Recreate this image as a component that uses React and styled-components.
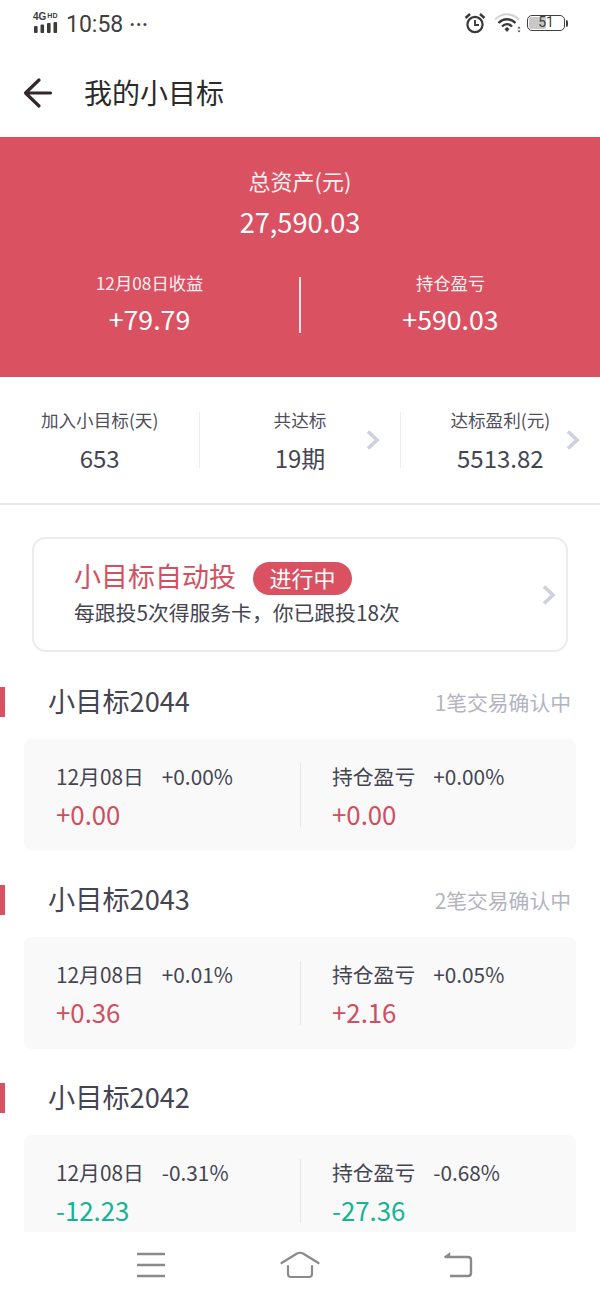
import styled, { createGlobalStyle } from "styled-components";

const GlobalStyle = createGlobalStyle`
  html, body { margin: 0; padding: 0; background: #fff; }
  * { box-sizing: border-box; }
  body { font-family: "Noto Sans CJK SC", "Noto Sans", sans-serif; }
`;

const goals = [
  {
    name: "小目标2044",
    note: "1笔交易确认中",
    dayRate: "+0.00%",
    day: "+0.00",
    holdRate: "+0.00%",
    hold: "+0.00",
  },
  {
    name: "小目标2043",
    note: "2笔交易确认中",
    dayRate: "+0.01%",
    day: "+0.36",
    holdRate: "+0.05%",
    hold: "+2.16",
  },
  {
    name: "小目标2042",
    note: "",
    dayRate: "-0.31%",
    day: "-12.23",
    holdRate: "-0.68%",
    hold: "-27.36",
    down: true,
  },
];

function Chevron() {
  return (
    <ChevronSvg viewBox="0 0 14 20" width="14" height="20">
      <path d="M2 1.5 L11 10 L2 18.5" fill="none" stroke="#ced0de" strokeWidth="3.6" />
    </ChevronSvg>
  );
}

function Signal() {
  return (
    <SignalBox>
      <SignalLabel>
        4G<small>HD</small>
      </SignalLabel>
      <svg width="26" height="11" viewBox="0 0 26 11">
        <rect x="1" y="4" width="3.6" height="7" rx="1" fill="#3c3c3c" />
        <rect x="7.5" y="2.5" width="3.6" height="8.5" rx="1" fill="#3c3c3c" />
        <rect x="14" y="1" width="3.6" height="10" rx="1" fill="#3c3c3c" />
        <rect x="20.5" y="0" width="3.6" height="11" rx="1" fill="#3c3c3c" />
      </svg>
    </SignalBox>
  );
}

function Alarm() {
  return (
    <svg width="22" height="22" viewBox="0 0 22 22" fill="none" stroke="#3a3a3a">
      <circle cx="11" cy="12.5" r="7.6" strokeWidth="2.2" />
      <path d="M11 8 V13 H15" strokeWidth="1.8" />
      <path d="M1.5 6 L6 2 M20.5 6 L16 2" strokeWidth="2.4" />
    </svg>
  );
}

function Wifi() {
  return (
    <svg width="28" height="22" viewBox="0 0 28 22" fill="none">
      <path d="M1 7.5 C8 0.5 18 0.5 25 7.5" stroke="#d2d2d2" strokeWidth="2.2" />
      <path d="M4.5 11 C9.5 6 16.5 6 21.5 11" stroke="#3a3a3a" strokeWidth="2.4" />
      <path d="M8 14.5 C11 11.5 15 11.5 18 14.5" stroke="#3a3a3a" strokeWidth="2.4" />
      <path d="M10.5 17 L13 15 L15.5 17 L13 20 Z" fill="#3a3a3a" />
      <path d="M25 14.5 L26.5 16.5 H23.5 Z M25 20.5 L26.5 18.5 H23.5 Z" fill="#3a3a3a" />
    </svg>
  );
}

function Battery() {
  return (
    <BatteryBox>
      <BatteryBody>
        <BatteryFill style={{ width: "51%" }} />
        <BatteryText>51</BatteryText>
      </BatteryBody>
      <BatteryCap />
    </BatteryBox>
  );
}

function GoalCell({ label, rate, value, down }) {
  return (
    <Cell>
      <CellTop>
        <span>{label}</span>
        <span>{rate}</span>
      </CellTop>
      <CellValue $down={down}>{value}</CellValue>
    </Cell>
  );
}

export default function App() {
  return (
    <Page>
      <GlobalStyle />
      <StatusBar>
        <StatusLeft>
          <Signal />
          <Clock>10:58</Clock>
          <Dots>•••</Dots>
        </StatusLeft>
        <StatusRight>
          <Alarm />
          <WifiSlot>
            <Wifi />
          </WifiSlot>
          <Battery />
        </StatusRight>
      </StatusBar>

      <Header>
        <svg width="30" height="32" viewBox="0 0 30 32" fill="none" stroke="#33282a" strokeWidth="3.2" strokeLinecap="round" strokeLinejoin="round">
          <path d="M16 3 L2.5 16 L16 29 M3 16 H27.5" />
        </svg>
        <HeaderTitle>我的小目标</HeaderTitle>
      </Header>

      <Scroll>
        <Hero>
          <HeroLabel>总资产(元)</HeroLabel>
          <HeroTotal>27,590.03</HeroTotal>
          <HeroRow>
            <HeroCell>
              <HeroSmall>12月08日收益</HeroSmall>
              <HeroValue>+79.79</HeroValue>
            </HeroCell>
            <HeroDivider />
            <HeroCell>
              <HeroSmall>持仓盈亏</HeroSmall>
              <HeroValue>+590.03</HeroValue>
            </HeroCell>
          </HeroRow>
        </Hero>

        <Stats>
          <StatCell>
            <StatLabel>加入小目标(天)</StatLabel>
            <StatValue>653</StatValue>
          </StatCell>
          <StatCell $line>
            <StatLabel>共达标</StatLabel>
            <StatValue>19期</StatValue>
            <StatArrow><Chevron /></StatArrow>
          </StatCell>
          <StatCell $line>
            <StatLabel>达标盈利(元)</StatLabel>
            <StatValue>5513.82</StatValue>
            <StatArrow><Chevron /></StatArrow>
          </StatCell>
        </Stats>

        <AutoCard>
          <AutoText>
            <AutoHead>
              <AutoTitle>小目标自动投</AutoTitle>
              <AutoBadge>进行中</AutoBadge>
            </AutoHead>
            <AutoSub>每跟投5次得服务卡，你已跟投18次</AutoSub>
          </AutoText>
          <Chevron />
        </AutoCard>

        {goals.map((goal) => (
          <Goal key={goal.name}>
            <GoalHead>
              <GoalName>{goal.name}</GoalName>
              <GoalNote>{goal.note}</GoalNote>
            </GoalHead>
            <GoalCard>
              <GoalCell label="12月08日" rate={goal.dayRate} value={goal.day} down={goal.down} />
              <GoalDivider />
              <GoalCell label="持仓盈亏" rate={goal.holdRate} value={goal.hold} down={goal.down} />
            </GoalCard>
          </Goal>
        ))}
      </Scroll>

      <BottomNav>
        <svg width="30" height="26" viewBox="0 0 30 26" stroke="#8a8a8a" strokeWidth="2.4">
          <path d="M1 2 H29 M1 13 H29 M1 24 H29" />
        </svg>
        <HomeIcon width="40" height="28" viewBox="0 0 40 28" fill="none" stroke="#8a8a8a" strokeWidth="2.2" strokeLinecap="round" strokeLinejoin="round">
          <path d="M1.5 12 L17 2.5 Q20 1 23 2.5 L38.5 12" />
          <path d="M8 15 V23 Q8 26 11 26 H29 Q32 26 32 23 V15" />
        </HomeIcon>
        <svg width="30" height="26" viewBox="0 0 30 26" fill="none" stroke="#8a8a8a" strokeWidth="2.4">
          <path d="M2 5 H25 Q28 5 28 8 V21 Q28 24 25 24 H7" />
          <path d="M7 0.5 V5 H1 Z" fill="#8a8a8a" strokeWidth="0.5" />
        </svg>
      </BottomNav>
    </Page>
  );
}

const Page = styled.div`
  width: 600px;
  height: 1300px;
  display: flex;
  flex-direction: column;
  overflow: hidden;
  background: #fff;
`;

const StatusBar = styled.div`
  height: 48px;
  flex: none;
  display: flex;
  align-items: center;
  justify-content: space-between;
  padding: 0 32px 0 33px;
`;

const StatusLeft = styled.div`
  display: flex;
  align-items: center;
`;

const StatusRight = styled.div`
  display: flex;
  align-items: center;
  margin-bottom: 2px;
`;

const WifiSlot = styled.div`
  display: flex;
  margin: 0 5px 0 8px;
`;

const SignalBox = styled.div`
  width: 27px;
  display: flex;
  flex-direction: column;
  margin-bottom: 4px;
`;

const SignalLabel = styled.div`
  font: 700 10px/10px "Liberation Sans", sans-serif;
  color: #3c3c3c;
  white-space: nowrap;

  small {
    font-size: 7px;
    vertical-align: 2px;
    margin-left: 1px;
  }
`;

const Clock = styled.span`
  font: 400 23px/28px Roboto, sans-serif;
  color: #3f3f3f;
  margin: 2px 0 0 6px;
`;

const Dots = styled.span`
  font: 400 11px/28px "Liberation Sans", sans-serif;
  color: #3f3f3f;
  letter-spacing: 2.5px;
  margin-left: 7px;
`;

const BatteryBox = styled.div`
  display: flex;
  align-items: center;
`;

const BatteryBody = styled.div`
  position: relative;
  width: 38px;
  height: 16px;
  border: 1.5px solid #3f3f3f;
  border-radius: 5px;
  padding: 1px;
`;

const BatteryFill = styled.div`
  height: 100%;
  background: #c8c8c8;
  border-radius: 2px;
`;

const BatteryText = styled.span`
  position: absolute;
  inset: 0;
  text-align: center;
  font: 400 14px/13px Roboto, sans-serif;
  color: #3f3f3f;
`;

const BatteryCap = styled.div`
  width: 2px;
  height: 7px;
  margin-left: 1px;
  background: #3f3f3f;
  border-radius: 0 2px 2px 0;
`;

const Header = styled.div`
  height: 89px;
  flex: none;
  display: flex;
  align-items: center;
  padding: 0 0 0 23px;
`;

const HeaderTitle = styled.div`
  font-size: 28px;
  line-height: 40px;
  color: #2b2b2b;
  margin: -2px 0 0 31px;
`;

const Scroll = styled.div`
  flex: 1;
  min-height: 0;
  overflow: hidden;
`;

const Hero = styled.div`
  height: 240px;
  background: #da5162;
  color: #fff;
  display: flex;
  flex-direction: column;
  align-items: center;
  padding-top: 28px;
`;

const HeroLabel = styled.div`
  font-size: 22px;
  line-height: 30px;
  opacity: 0.92;
`;

const HeroTotal = styled.div`
  font-size: 27.2px;
  line-height: 40px;
  margin-top: 6px;
`;

const HeroRow = styled.div`
  width: 100%;
  display: flex;
  align-items: center;
  margin-top: 29px;
`;

const HeroCell = styled.div`
  flex: 1;
  text-align: center;
`;

const HeroSmall = styled.div`
  font-size: 17.3px;
  line-height: 26px;
  opacity: 0.92;
`;

const HeroValue = styled.div`
  font-size: 26.7px;
  line-height: 38px;
  margin-top: 4px;
`;

const HeroDivider = styled.div`
  width: 2px;
  height: 56px;
  margin-top: 2px;
  background: rgba(255, 255, 255, 0.85);
`;

const Stats = styled.div`
  height: 128px;
  display: flex;
  align-items: center;
  border-bottom: 2px solid #e9e9ec;
`;

const StatCell = styled.div`
  position: relative;
  flex: 1;
  height: 56px;
  text-align: center;
  border-left: ${(p) => (p.$line ? "1px solid #ececf0" : "none")};
`;

const StatLabel = styled.div`
  font-size: 17.6px;
  line-height: 20px;
  color: #4f4f5b;
  margin-top: -2px;
`;

const StatValue = styled.div`
  font-size: 24px;
  line-height: 32px;
  color: #454552;
  margin-top: 12px;
`;

const StatArrow = styled.div`
  position: absolute;
  right: 20px;
  top: 18px;
`;

const ChevronSvg = styled.svg`
  display: block;
  flex: none;
`;

const AutoCard = styled.div`
  height: 115px;
  margin: 32px 32px 0;
  border: 2px solid #ececf0;
  border-radius: 14px;
  display: flex;
  align-items: center;
  justify-content: space-between;
  padding: 0 10px 0 40px;
`;

const AutoText = styled.div`
  display: flex;
  flex-direction: column;
  padding-bottom: 6px;
`;

const AutoHead = styled.div`
  display: flex;
  align-items: center;
  gap: 17px;
`;

const AutoTitle = styled.div`
  font-size: 27px;
  line-height: 38px;
  color: #d4505f;
`;

const AutoBadge = styled.div`
  width: 99px;
  height: 33px;
  margin-top: 4px;
  border-radius: 17px;
  background: #da5162;
  color: #fff;
  font-size: 22px;
  line-height: 31px;
  text-align: center;
`;

const AutoSub = styled.div`
  font-size: 20.8px;
  line-height: 28px;
  color: #454552;
  margin-top: 3px;
`;

const Goal = styled.div`
  margin-top: 32px;

  & + & {
    margin-top: 31px;
  }
`;

const GoalHead = styled.div`
  position: relative;
  height: 36px;
  display: flex;
  align-items: center;
  justify-content: space-between;
  padding: 0 29px 0 48px;

  &::before {
    content: "";
    position: absolute;
    left: 0;
    top: 3px;
    width: 5px;
    height: 30px;
    background: #da5162;
  }
`;

const GoalName = styled.div`
  font-size: 27.2px;
  line-height: 36px;
  color: #454552;
  margin-bottom: 4px;
`;

const GoalNote = styled.div`
  font-size: 20.8px;
  line-height: 36px;
  color: #b4b4bf;
`;

const GoalCard = styled.div`
  height: 112px;
  margin: 19px 24px 0;
  background: #f9f9f9;
  border-radius: 8px;
  display: flex;
  align-items: center;
`;

const Cell = styled.div`
  flex: 1;
  padding: 4px 0 0 32px;

  &:last-child {
    padding-left: 31px;
  }
`;

const CellTop = styled.div`
  display: flex;
  gap: 18px;
  font-size: 20.8px;
  line-height: 28px;
  color: #454552;
`;

const CellValue = styled.div`
  font-size: 25.8px;
  line-height: 36px;
  margin-top: 6px;
  color: ${(p) => (p.$down ? "#13b594" : "#cf4f60")};
`;

const GoalDivider = styled.div`
  width: 1px;
  height: 64px;
  flex: none;
  background: #e6e6e9;
`;

const BottomNav = styled.div`
  height: 68px;
  flex: none;
  background: #fff;
  display: flex;
  align-items: center;
  padding: 0 0 2px 136px;
`;

const HomeIcon = styled.svg`
  margin: 0 123px 0 114px;
`;
